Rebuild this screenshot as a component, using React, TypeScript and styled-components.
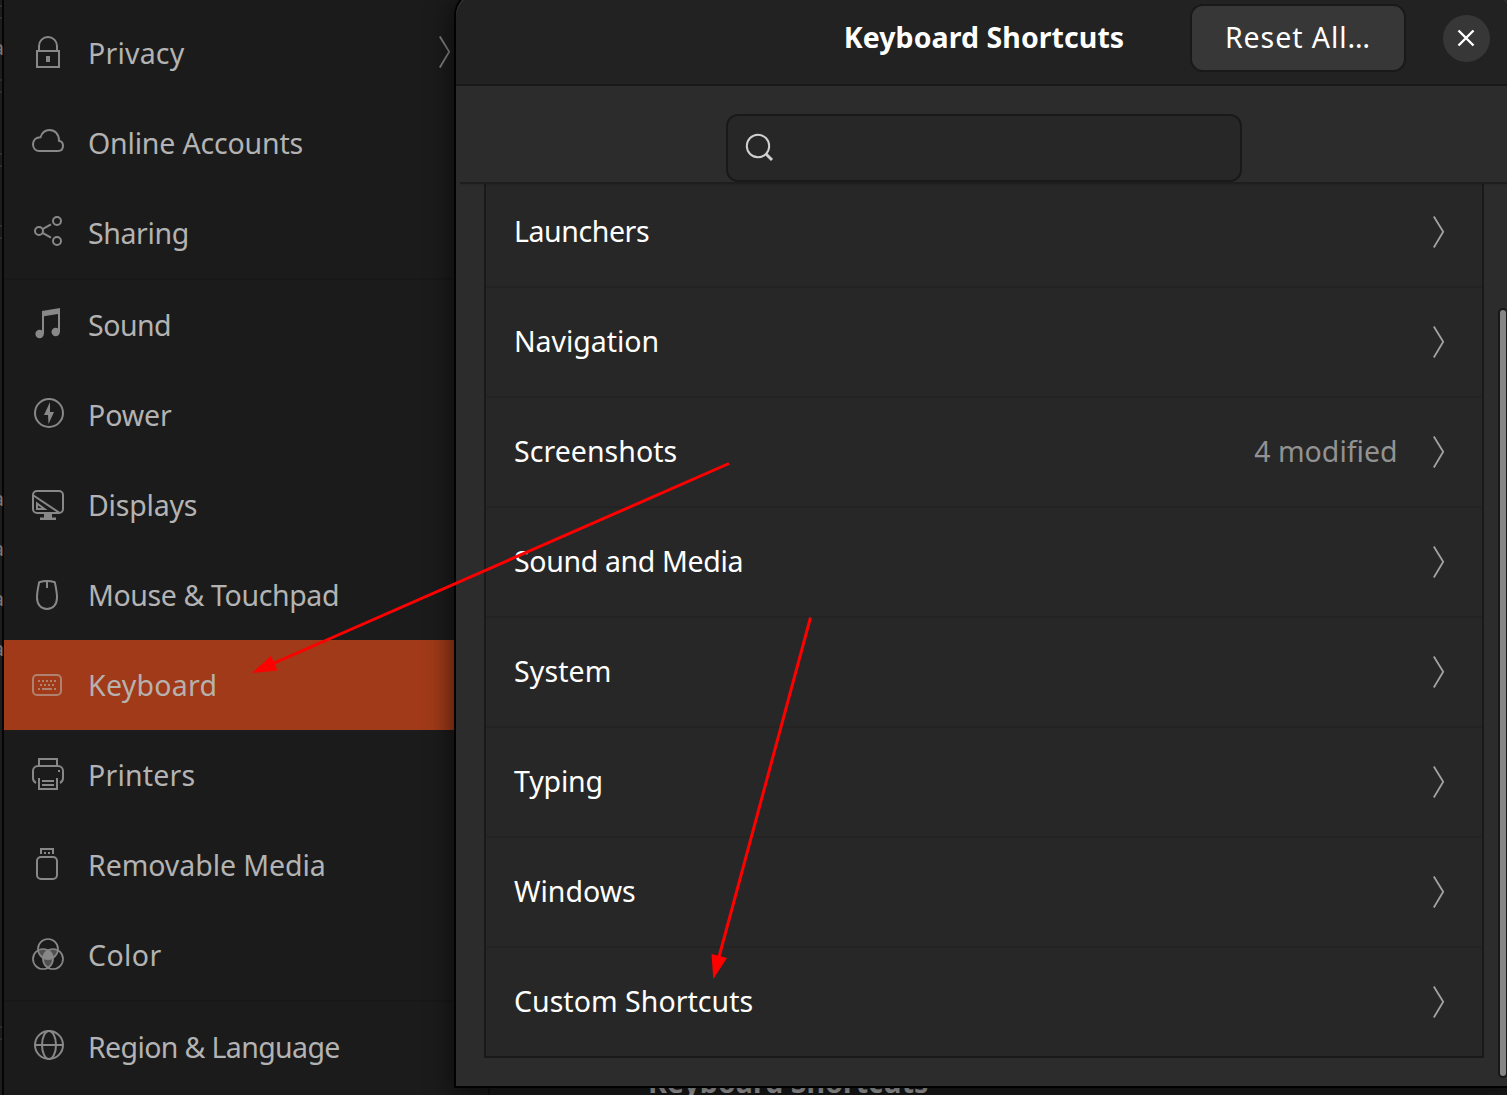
import React from 'react';
import styled, { createGlobalStyle } from 'styled-components';

const GlobalStyle = createGlobalStyle`
  html, body { margin: 0; padding: 0; background: #1b1b1b; overflow: hidden; }
  * { box-sizing: border-box; }
`;

const Screen = styled.div`
  position: relative;
  width: 1507px;
  height: 1095px;
  overflow: hidden;
  display: flex;
  background: #1b1b1b;
  font-family: 'Noto Sans', sans-serif;
  font-size: 28.5px;
  line-height: 40px;
  white-space: nowrap;
`;

/* Sliver of the window that lies behind Settings */
const BackWindow = styled.div`
  position: relative;
  width: 4px;
  flex: none;
  background: #1d1d1d;
  border-right: 2px solid #050505;
`;

const Rule = styled.div<{ $y: number }>`
  position: absolute;
  left: 0;
  top: ${p => p.$y}px;
  width: 2px;
  height: 2px;
  background: #2e2e2e;
`;

const CutGlyph = styled.span<{ $y: number }>`
  position: absolute;
  top: ${p => p.$y}px;
  right: -2px;
  font-size: 20px;
  line-height: 20px;
  color: #7a7a7a;
  width: 4px;
  overflow: hidden;
  display: flex;
  justify-content: flex-end;
`;

const Sidebar = styled.nav`
  width: 484px;
  flex: none;
  display: flex;
  flex-direction: column;
  padding-top: 8px;
  border-right: 2px solid #111;
  box-sizing: content-box;
`;

const SidebarRow = styled.div<{ $selected?: boolean }>`
  flex: none;
  display: flex;
  align-items: flex-start;
  height: 90px;
  padding: 0 37px 0 28px;
  background: ${p => (p.$selected ? '#a03a18' : 'transparent')};
  color: ${p => (p.$selected ? '#b7b1ae' : '#b3b3b3')};
`;

const SidebarDivider = styled.div`
  flex: none;
  height: 2px;
  background: #181818;
`;

const IconSlot = styled.span<{ $selected?: boolean }>`
  display: flex;
  margin-top: 28px;
  width: 32px;
  height: 32px;
  color: ${p => (p.$selected ? '#b18170' : '#888')};
`;

const RowLabel = styled.span<{ $track: number }>`
  flex: 1;
  margin: 25px 0 0 24px;
  letter-spacing: ${p => p.$track}px;
`;

const ArrowSlot = styled.span`
  display: flex;
  margin-top: 28px;
  color: #808080;
`;

const Content = styled.main`
  flex: 1;
  display: flex;
  align-items: flex-end;
  background: #1c1c1c;
  padding-left: 158px;
`;

const ContentHeading = styled.h2`
  margin: 0 0 -7px;
  font-size: 28.5px;
  line-height: 40px;
  font-weight: 700;
  letter-spacing: 0.07px;
  color: #b8b8b8;
`;

const Dialog = styled.section`
  position: absolute;
  left: 456px;
  top: -8px;
  width: 1056px;
  height: 1094px;
  display: flex;
  flex-direction: column;
  background: #2c2c2c;
  border-radius: 24px 24px 0 0;
  box-shadow: 0 0 0 2px #020202, 0 4px 26px 4px rgba(0, 0, 0, 0.6);
`;

const Header = styled.header`
  flex: none;
  height: 94px;
  display: grid;
  grid-template-columns: 1fr auto 1fr;
  align-items: center;
  padding: 0 22.5px 0;
  background: #222;
  border-bottom: 2px solid #181818;
  border-radius: 24px 24px 0 0;
  box-shadow: inset 0 2px 0 #333;
`;

const Title = styled.h1`
  grid-column: 2;
  margin: 0 0 2px;
  font-size: 28.5px;
  line-height: 40px;
  font-weight: 700;
  letter-spacing: 0.07px;
  color: #fff;
`;

const HeaderActions = styled.div`
  grid-column: 3;
  justify-self: end;
  display: flex;
  align-items: center;
  gap: 36.5px;
`;

const ResetButton = styled.button`
  width: 216px;
  height: 68px;
  padding: 0 0 2px;
  border: 2px solid #191919;
  border-radius: 13px;
  background: #373737;
  color: #fff;
  font: inherit;
  letter-spacing: 0.95px;
`;

const CloseButton = styled.button`
  display: flex;
  align-items: center;
  justify-content: center;
  width: 47px;
  height: 47px;
  padding: 0;
  border: 0;
  border-radius: 50%;
  background: #373737;
  color: #fff;
`;

const SearchBar = styled.div`
  position: relative;
  z-index: 1;
  flex: none;
  height: 96px;
  display: flex;
  justify-content: center;
  align-items: flex-end;
  background: #2c2c2c;
  &::after {
    content: '';
    position: absolute;
    left: 4px;
    right: 0;
    top: 96px;
    height: 4px;
    background: linear-gradient(#1e1e1e 50%, rgba(0, 0, 0, 0.08) 50%);
  }
`;

const SearchField = styled.label`
  display: flex;
  align-items: center;
  width: 516px;
  height: 68px;
  padding: 0 17px;
  border: 2px solid #191919;
  border-radius: 12px;
  background: #272727;
  color: #d0d0d0;
`;

const Viewport = styled.div`
  flex: 1;
  min-height: 0;
  display: flex;
  justify-content: space-between;
  align-items: flex-start;
  padding: 0 4px 0 28px;
  overflow: hidden;
`;

const List = styled.ul`
  width: 1000px;
  margin: -6px 0 0;
  padding: 0;
  list-style: none;
  border: 2px solid #191919;
  background: #272727;
`;

const ListRow = styled.li`
  display: flex;
  align-items: center;
  height: 110px;
  padding: 0 37px 0 28px;
  border-bottom: 2px solid #232323;
  color: #fff;
  &:last-child { height: 108px; border-bottom: 0; }
`;

const ListLabel = styled.span<{ $track: number }>`
  flex: 1;
  padding-bottom: 2px;
  letter-spacing: ${p => p.$track}px;
`;

const Status = styled.span`
  padding-bottom: 2px;
  margin-right: 35.5px;
  color: #929292;
`;

const ListArrow = styled.span`
  display: flex;
  color: #a2a2a2;
`;

const Scrollbar = styled.div`
  align-self: stretch;
  display: flex;
  flex-direction: column;
  justify-content: flex-end;
  padding-bottom: 8px;
`;

const Thumb = styled.div`
  width: 10px;
  height: 770px;
  border: 2px solid #181818;
  border-radius: 5px;
  background: #868686;
`;

const Annotations = styled.svg`
  position: absolute;
  left: 0;
  top: 0;
  pointer-events: none;
`;

const Glyph = ({ children }: { children: React.ReactNode }) => (
  <svg width="32" height="32" viewBox="0 0 32 32" fill="none" stroke="currentColor" strokeWidth="2">
    {children}
  </svg>
);

const Chevron = () => (
  <svg width="12" height="32" viewBox="0 0 12 32" fill="none" stroke="currentColor" strokeWidth="1.8">
    <path d="M0.8 0.5L10.2 15.8L0.8 31.5" />
  </svg>
);

const Dots = ({ xs, y }: { xs: number[]; y: number }) => (
  <>
    {xs.map(x => (
      <rect key={x} x={x} y={y} width="2" height="2" fill="currentColor" stroke="none" />
    ))}
  </>
);

const icons: Record<string, React.ReactNode> = {
  lock: (
    <>
      <rect x="5" y="15" width="22" height="16" />
      <path d="M7 15V10a9 9 0 0 1 18 0v5" />
      <rect x="14" y="20" width="4" height="6" fill="currentColor" stroke="none" />
    </>
  ),
  cloud: (
    <path d="M7.5 25C3.5 25 1 22 1 18.2C1 14 4 11.2 8.5 11.2C10 6.5 13.5 4 17.5 4C23 4 27 8 27 14.8C29.7 15.3 31 17.3 31 19.8C31 23 29 25 26 25Z" />
  ),
  share: (
    <>
      <circle cx="7" cy="15" r="4" />
      <circle cx="25" cy="5" r="4" />
      <circle cx="25" cy="25" r="4" />
      <path d="M10.5 13.2L19 8.3M10.5 16.8L19 21.7" />
    </>
  ),
  music: (
    <g fill="currentColor" stroke="none">
      <path d="M10 3L28 0V24h-2V6L12 8.2V26h-2Z" />
      <circle cx="7.6" cy="26" r="4.2" />
      <circle cx="23.7" cy="24" r="4.2" />
    </g>
  ),
  power: (
    <>
      <circle cx="17" cy="15" r="14" />
      <path d="M18 4L12 17h4L16.5 26L22 14h-4Z" fill="currentColor" stroke="none" />
    </>
  ),
  display: (
    <>
      <rect x="1" y="3" width="30" height="22" rx="4" />
      <path d="M1.5 7.5L27 24.5M5 15.5V21h7.5Z" />
      <path d="M12 25h8v4.500h4V32H8v-2.500h4Z" fill="currentColor" stroke="none" />
    </>
  ),
  mouse: (
    <>
      <path d="M7.2 4.2C12 2.6 18 2.6 22.8 4.2C23.8 9 25 14 25 19.5C25 26.5 21 31 15 31S5 26.5 5 19.5C5 14 6.2 9 7.2 4.2Z" />
      <path d="M15 3v7" />
    </>
  ),
  keyboard: (
    <>
      <rect x="1" y="7" width="28" height="20" rx="4" />
      <Dots xs={[6, 10, 14, 18, 22]} y={12} />
      <Dots xs={[8, 12, 16, 20]} y={16} />
      <Dots xs={[6, 22]} y={20} />
      <path d="M10 21h10" />
    </>
  ),
  printer: (
    <>
      <path d="M7 8V1h18v7" />
      <path d="M4 25C2 24 1 22.5 1 20V13a5 5 0 0 1 5-5h20a5 5 0 0 1 5 5v7c0 2.5-1 4-3 5" />
      <path d="M7 20v11h18V20M10 23h12M10 27h12" />
      <Dots xs={[26]} y={12} />
    </>
  ),
  usb: (
    <>
      <path d="M9 6V1h12v5" />
      <Dots xs={[12, 16]} y={4} />
      <rect x="5" y="9" width="20" height="22" rx="4" />
    </>
  ),
  color: (
    <>
      <g fill="currentColor" stroke="none">
        <path opacity=".5" d="M6 13.2A10 10 0 0 1 16 12.6A10 10 0 0 1 26 13.2A10.3 10.3 0 0 1 21 20A10 10 0 0 1 16 29.6A10 10 0 0 1 11 20A10.3 10.3 0 0 1 6 13.2Z" />
        <path d="M16 12.5Q20.5 16 21 20Q16 23 11 20Q11.5 16 16 12.5Z" />
      </g>
      <g strokeWidth="1.7">
        <circle cx="16" cy="11" r="10" />
        <circle cx="11" cy="21" r="10" />
        <circle cx="21" cy="21" r="10" />
      </g>
    </>
  ),
  globe: (
    <>
      <circle cx="17" cy="15" r="14" />
      <ellipse cx="17" cy="15" rx="7" ry="14" />
      <path d="M3 15h28" />
    </>
  ),
};

type Item = { icon: string; label: string; track: number; arrow?: boolean; selected?: boolean };

const groups: Item[][] = [
  [
    { icon: 'lock', label: 'Privacy', track: 0.2, arrow: true },
    { icon: 'cloud', label: 'Online Accounts', track: -0.18 },
    { icon: 'share', label: 'Sharing', track: -0.38 },
  ],
  [
    { icon: 'music', label: 'Sound', track: -0.5 },
    { icon: 'power', label: 'Power', track: -0.1 },
    { icon: 'display', label: 'Displays', track: -0.2 },
    { icon: 'mouse', label: 'Mouse & Touchpad', track: -0.38 },
    { icon: 'keyboard', label: 'Keyboard', track: 0.28, selected: true },
    { icon: 'printer', label: 'Printers', track: 0.2 },
    { icon: 'usb', label: 'Removable Media', track: -0.07 },
    { icon: 'color', label: 'Color', track: 0.4 },
  ],
  [{ icon: 'globe', label: 'Region & Language', track: -0.63 }],
];

const shortcuts: { label: string; track: number; status?: string }[] = [
  { label: 'Launchers', track: -0.42 },
  { label: 'Navigation', track: -0.05 },
  { label: 'Screenshots', track: 0.05, status: '4 modified' },
  { label: 'Sound and Media', track: -0.35 },
  { label: 'System', track: 0.1 },
  { label: 'Typing', track: -0.15 },
  { label: 'Windows', track: 0 },
  { label: 'Custom Shortcuts', track: 0.03 },
];

export default function App() {
  return (
    <Screen>
      <GlobalStyle />
      <BackWindow>
        {[5, 17, 79, 91, 153, 165, 225, 237, 1026, 1038].map(y => (
          <Rule key={y} $y={y} />
        ))}
        {[38, 489, 539, 589, 639].map(y => (
          <CutGlyph key={y} $y={y}>a</CutGlyph>
        ))}
      </BackWindow>

      <Sidebar>
        {groups.map((items, i) => (
          <React.Fragment key={i}>
            {i > 0 && <SidebarDivider />}
            {items.map(item => (
              <SidebarRow key={item.label} $selected={item.selected}>
                <IconSlot $selected={item.selected}>
                  <Glyph>{icons[item.icon]}</Glyph>
                </IconSlot>
                <RowLabel $track={item.track}>{item.label}</RowLabel>
                {item.arrow && (
                  <ArrowSlot>
                    <Chevron />
                  </ArrowSlot>
                )}
              </SidebarRow>
            ))}
          </React.Fragment>
        ))}
      </Sidebar>

      <Content>
        <ContentHeading>Keyboard Shortcuts</ContentHeading>
      </Content>

      <Dialog>
        <Header>
          <Title>Keyboard Shortcuts</Title>
          <HeaderActions>
            <ResetButton>Reset All…</ResetButton>
            <CloseButton aria-label="Close">
              <svg width="18" height="18" viewBox="0 0 18 18" fill="none" stroke="currentColor" strokeWidth="2.4">
                <path d="M1.5 1.5L16.5 16.5M16.5 1.5L1.5 16.5" />
              </svg>
            </CloseButton>
          </HeaderActions>
        </Header>
        <SearchBar>
          <SearchField>
            <svg width="30" height="30" viewBox="0 0 30 30" fill="none" stroke="currentColor">
              <circle cx="13" cy="13" r="11.2" strokeWidth="2" />
              <path d="M20.8 20.8L27 27" strokeWidth="3" />
            </svg>
          </SearchField>
        </SearchBar>
        <Viewport>
          <List>
            {shortcuts.map(s => (
              <ListRow key={s.label}>
                <ListLabel $track={s.track}>{s.label}</ListLabel>
                {s.status && <Status>{s.status}</Status>}
                <ListArrow>
                  <Chevron />
                </ListArrow>
              </ListRow>
            ))}
          </List>
          <Scrollbar>
            <Thumb />
          </Scrollbar>
        </Viewport>
      </Dialog>

      <Annotations width="1507" height="1095" viewBox="0 0 1507 1095" fill="#f00" stroke="none">
        <path d="M729 463.5L272 664" stroke="#f00" strokeWidth="3" />
        <path d="M252 673L271 656L277.5 670.5Z" />
        <path d="M810.5 617.5L719 957" stroke="#f00" strokeWidth="3" />
        <path d="M713.3 979L711.5 954L727 958Z" />
      </Annotations>
    </Screen>
  );
}
